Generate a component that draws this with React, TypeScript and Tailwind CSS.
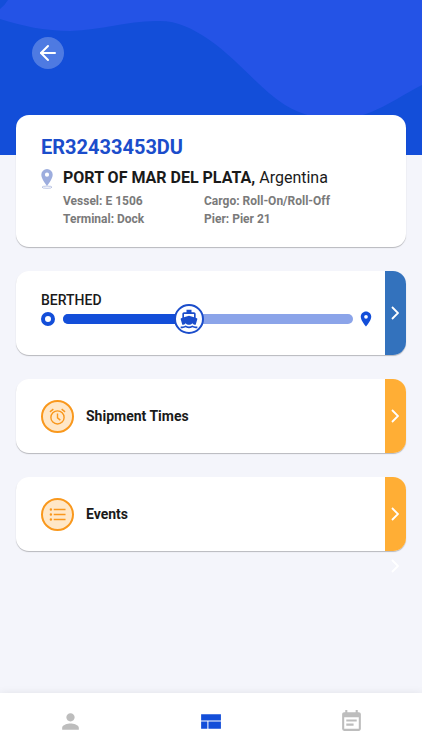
import React from 'react';
import { ArrowLeft } from 'lucide-react';
import { MdDirectionsBoat, MdEventNote, MdLocationOn, MdPerson } from 'react-icons/md';

interface Shipment {
  code: string;
  port: string;
  country: string;
  vessel: string;
  cargo: string;
  terminal: string;
  pier: string;
  status: string;
  progress: number;
}

const shipment: Shipment = {
  code: 'ER32433453DU',
  port: 'PORT OF MAR DEL PLATA,',
  country: 'Argentina',
  vessel: 'E 1506',
  cargo: 'Roll-On/Roll-Off',
  terminal: 'Dock',
  pier: 'Pier 21',
  status: 'BERTHED',
  progress: 43.3,
};

const HeaderWave: React.FC = () => (
  <svg
    className="absolute inset-0 h-full w-full"
    viewBox="0 0 422 155"
    preserveAspectRatio="none"
    aria-hidden="true"
  >
    <path
      fill="#2453e6"
      d="M8 0 Q5 5 0 9 V19 C22 26 45 31 70 31 C102 30 126 21 156 21 C176 20 192 28 208 39 C240 61 258 88 285 105 C303 116 320 119 339 119 C370 119 396 98 422 85 V0 Z"
    />
  </svg>
);

const PortPin: React.FC = () => (
  <svg width="12" height="20" viewBox="0 0 12 20" aria-hidden="true">
    <ellipse cx="6" cy="18.2" rx="5" ry="1.1" fill="none" stroke="#b4c0e2" strokeWidth="0.9" />
    <path
      fill="#9dadde"
      fillRule="evenodd"
      d="M6 0 A5.7 5.7 0 0 0 .3 5.7 C.3 9.8 6 17 6 17 S11.7 9.8 11.7 5.7 A5.7 5.7 0 0 0 6 0 Z M6 3.6 A2.1 2.1 0 1 1 6 7.8 A2.1 2.1 0 1 1 6 3.6 Z"
    />
  </svg>
);

const Chevron: React.FC = () => (
  <svg width="8" height="14" viewBox="0 0 8 14" fill="none" stroke="white" strokeWidth="1.8" aria-hidden="true">
    <path d="M1 1 L7 7 L1 13" />
  </svg>
);

const AlarmIcon: React.FC = () => (
  <svg width="17" height="17" viewBox="0 0 18 18" fill="none" stroke="#f9981d" strokeWidth="1.5" aria-hidden="true">
    <circle cx="9" cy="10" r="7" />
    <path d="M9 5.8 V10.5 L12 12.8 M1 4.1 L4.6 1.2 M13.4 1.2 L17 4.1" />
  </svg>
);

const ListIcon: React.FC = () => (
  <svg width="17" height="17" viewBox="0 0 18 18" fill="none" stroke="#f9981d" aria-hidden="true">
    <path strokeWidth="1.6" d="M5 3.7 H17.5 M5 9 H17.5 M5 14.3 H17.5" />
    <path strokeWidth="2.6" strokeLinecap="round" d="M2 3.7 h.01 M2 9 h.01 M2 14.3 h.01" />
  </svg>
);

const DashboardIcon: React.FC = () => (
  <svg width="25" height="25" viewBox="0 0 24 24" fill="#134ed9" aria-hidden="true">
    <path d="M3 19h6v-7H3v7zm7 0h12v-7H10v7zM3 5v6h19V5H3z" />
  </svg>
);

interface MenuCardProps {
  label: string;
  icon: React.ReactNode;
}

const MenuCard: React.FC<MenuCardProps> = ({ label, icon }) => (
  <button
    type="button"
    className="flex h-[74px] w-full overflow-hidden rounded-[13px] bg-white text-left shadow-[0_1px_1px_rgba(0,0,0,0.25)]"
  >
    <span className="flex flex-1 items-center gap-3 self-stretch pl-[25px]">
      <span className="flex size-[33px] items-center justify-center rounded-full border-2 border-[#f9981d] bg-[#ffe7c7]">
        {icon}
      </span>
      <span className="text-sm font-bold text-[#1a1a1a]">{label}</span>
    </span>
    <span className="flex w-[21px] items-center self-stretch bg-[#ffae35] pl-[6px]">
      <Chevron />
    </span>
  </button>
);

const App: React.FC = () => {
  return (
    <div className="flex min-h-screen flex-col bg-[#f4f5fb] font-['Roboto',sans-serif]">
      <header className="relative h-[155px] bg-[#134ed9] px-8 pt-[37px]">
        <HeaderWave />
        <button
          type="button"
          aria-label="Back"
          className="relative flex size-8 items-center justify-center rounded-full bg-white/25 text-white"
        >
          <ArrowLeft size={24} />
        </button>
      </header>

      <main className="relative -mt-10 flex flex-col gap-6 px-4">
        {/* Shipment details */}
        <section className="rounded-[13px] bg-white pt-5 pb-[19px] pl-[25px] shadow-[0_1px_1px_rgba(0,0,0,0.25)]">
          <h1 className="text-xl leading-6 font-bold text-[#1b4dcb]">{shipment.code}</h1>
          <div className="mt-[9px] flex gap-[10px]">
            <div className="pt-px">
              <PortPin />
            </div>
            <div className="flex-1">
              <h2 className="text-base leading-5 text-[#1a1a1a]">
                <span className="font-bold">{shipment.port}</span> {shipment.country}
              </h2>
              <div className="mt-1 grid grid-cols-[141px_1fr] text-xs leading-[18px] font-bold text-[#7a7a7a]">
                <p>Vessel: {shipment.vessel}</p>
                <p>Cargo: {shipment.cargo}</p>
                <p>Terminal: {shipment.terminal}</p>
                <p>Pier: {shipment.pier}</p>
              </div>
            </div>
          </div>
        </section>

        {/* Voyage progress */}
        <section className="flex h-[84px] overflow-hidden rounded-[13px] bg-white shadow-[0_1px_1px_rgba(0,0,0,0.25)]">
          <div className="flex-1 pt-5 pr-[10px] pl-[25px]">
            <p className="text-sm leading-[18px] font-medium text-[#1a1a1a]">{shipment.status}</p>
            <div className="flex h-5 items-center">
              <span className="size-[14px] rounded-full border-4 border-[#134ed9]" />
              <div className="relative mr-1 ml-2 h-[10px] flex-1 rounded-full bg-[#8ba4e9]">
                <div
                  className="h-[10px] rounded-full bg-[#134ed9]"
                  style={{ width: `${shipment.progress}%` }}
                />
                <span
                  className="absolute top-1/2 flex size-[30px] -translate-x-1/2 -translate-y-1/2 items-center justify-center rounded-full border-2 border-[#1b4dcb] bg-white text-[#1b4dcb]"
                  style={{ left: `${shipment.progress}%` }}
                >
                  <MdDirectionsBoat size={20} />
                </span>
              </div>
              <MdLocationOn size={18} className="text-[#134ed9]" />
            </div>
          </div>
          <button
            type="button"
            aria-label="Voyage details"
            className="flex w-[21px] items-center bg-[#3372bd] pl-[6px]"
          >
            <Chevron />
          </button>
        </section>

        <MenuCard label="Shipment Times" icon={<AlarmIcon />} />

        <div>
          <MenuCard label="Events" icon={<ListIcon />} />
          <div className="flex justify-end pt-2 pr-[7px]">
            <Chevron />
          </div>
        </div>
      </main>

      <nav className="mt-auto grid h-[57px] grid-cols-3 bg-white text-[#bdbdbd] shadow-[0_0_8px_rgba(0,0,0,0.08)]">
        <button type="button" aria-label="Profile" className="flex items-center justify-center">
          <MdPerson size={25} />
        </button>
        <button type="button" aria-label="Dashboard" className="flex items-center justify-center">
          <DashboardIcon />
        </button>
        <button type="button" aria-label="Schedule" className="flex items-center justify-center">
          <MdEventNote size={25} />
        </button>
      </nav>
    </div>
  );
};

export default App;
